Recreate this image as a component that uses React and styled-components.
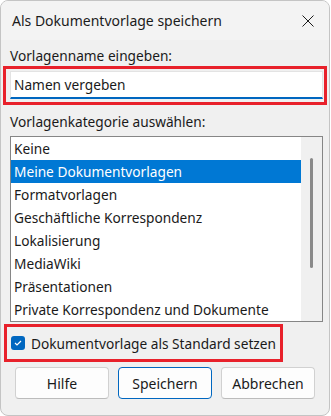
import React, { useState } from 'react';
import styled, { createGlobalStyle } from 'styled-components';

const GlobalStyle = createGlobalStyle`
  html, body {
    margin: 0;
    padding: 0;
    background: #ffffff;
  }
  body {
    font-family: "Noto Sans", "Open Sans", sans-serif;
    font-size: 13.7px;
    color: #1a1a1a;
  }
`;

const StyledWindow = styled.div`
  width: 328px;
  height: 414px;
  border: 1px solid #c4c4c4;
  border-radius: 8px;
  overflow: hidden;
  background: #f0f0f0;
  display: flex;
  flex-direction: column;
`;

const TitleBar = styled.div`
  height: 39px;
  flex: none;
  display: flex;
  align-items: center;
  justify-content: space-between;
  padding: 0 9px 0 11px;
  background: #f3f3f3;

  .title {
    font-size: 14px;
    line-height: 20px;
    color: #1b1b1b;
  }
`;

const CloseButton = styled.button`
  width: 24px;
  height: 24px;
  border: 0;
  padding: 0;
  background: transparent;
  display: flex;
  align-items: center;
  justify-content: center;
`;

const Body = styled.div`
  flex: 1;
  display: flex;
  flex-direction: column;
  padding: 6px 2px 0 2px;
`;

const Label = styled.div`
  line-height: 20px;
  padding-left: 7px;
  margin-top: ${({ $top }) => $top || 0}px;
`;

const Highlight = styled.div`
  border: 3px solid #e8212b;
  padding: ${({ $pad }) => $pad};
  margin: ${({ $margin }) => $margin || 0};
  align-self: ${({ $fit }) => ($fit ? 'flex-start' : 'stretch')};
`;

const NameInput = styled.input`
  display: block;
  box-sizing: border-box;
  width: 313px;
  height: 28px;
  margin: 0;
  padding: 0 3px;
  border: 1px solid #e3e3e3;
  border-bottom: 2px solid #0067c0;
  border-radius: 0;
  background: #ffffff;
  font: inherit;
  color: #1a1a1a;
  outline: none;
`;

const ListBox = styled.div`
  margin: 4px 0 0 7px;
  width: 311px;
  height: 184px;
  border: 1px solid #868686;
  background: #ffffff;
  display: flex;
`;

const Items = styled.ul`
  list-style: none;
  margin: 0;
  padding: 0;
  flex: 1;
`;

const Item = styled.li`
  height: 23px;
  line-height: 23px;
  padding-left: 3px;
  background: ${({ $selected }) => ($selected ? '#0078d4' : 'transparent')};
  color: ${({ $selected }) => ($selected ? '#ffffff' : '#1a1a1a')};
  white-space: nowrap;
`;

const ScrollTrack = styled.div`
  width: 21px;
  flex: none;
  background: #f0f0f0;
  display: flex;
  justify-content: center;
  padding-top: 21px;
  box-sizing: border-box;
`;

const ScrollThumb = styled.div`
  width: 3px;
  height: 110px;
  border-radius: 2px;
  background: #8a8a8a;
`;

const CheckRow = styled.label`
  display: flex;
  align-items: center;
  gap: 6px;
  height: 32px;
  padding-right: 4px;
`;

const CheckBox = styled.span`
  width: 14px;
  height: 14px;
  border-radius: 3px;
  background: #0067c0;
  display: flex;
  align-items: center;
  justify-content: center;
  flex: none;
`;

const ButtonRow = styled.div`
  display: flex;
  gap: 9px;
  padding: 5px 0 0 12px;
`;

const Button = styled.button`
  width: 94px;
  height: 32px;
  box-sizing: border-box;
  border-radius: 4px;
  border: 1px solid ${({ $primary }) => ($primary ? '#0067c0' : '#d1d1d1')};
  border-bottom-color: ${({ $primary }) => ($primary ? '#0067c0' : '#bcbcbc')};
  background: #fdfdfd;
  font: inherit;
  font-size: 14px;
  color: #1a1a1a;
  padding: 0;
`;

const categories = [
  'Keine',
  'Meine Dokumentvorlagen',
  'Formatvorlagen',
  'Geschäftliche Korrespondenz',
  'Lokalisierung',
  'MediaWiki',
  'Präsentationen',
  'Private Korrespondenz und Dokumente',
];

const App = () => {
  const [selected, setSelected] = useState(1);

  return (
    <>
      <GlobalStyle />
      <StyledWindow>
        <TitleBar>
          <span className="title">Als Dokumentvorlage speichern</span>
          <CloseButton aria-label="Schließen">
            <svg width="12" height="12" viewBox="0 0 12 12">
              <path d="M0.5 0.5 L11.5 11.5 M11.5 0.5 L0.5 11.5" stroke="#1b1b1b" strokeWidth="1" />
            </svg>
          </CloseButton>
        </TitleBar>

        <Body>
          <Label>Vorlagenname eingeben:</Label>
          <Highlight $pad="2px 3px 3px 4px">
            <NameInput defaultValue="Namen vergeben" />
          </Highlight>

          <Label $top={7}>Vorlagenkategorie auswählen:</Label>
          <ListBox>
            <Items>
              {categories.map((c, i) => (
                <Item key={c} $selected={i === selected} onClick={() => setSelected(i)}>
                  {c}
                </Item>
              ))}
            </Items>
            <ScrollTrack>
              <ScrollThumb />
            </ScrollTrack>
          </ListBox>

          <Highlight $pad="0 0 0 4px" $fit $margin="2px 0 0 1px">
            <CheckRow>
              <CheckBox>
                <svg width="8" height="6" viewBox="0 0 8 6">
                  <path d="M1 3 L3 5 L7 1" fill="none" stroke="#ffffff" strokeWidth="1.2" />
                </svg>
              </CheckBox>
              Dokumentvorlage als Standard setzen
            </CheckRow>
          </Highlight>

          <ButtonRow>
            <Button>Hilfe</Button>
            <Button $primary>Speichern</Button>
            <Button>Abbrechen</Button>
          </ButtonRow>
        </Body>
      </StyledWindow>
    </>
  );
};

export default App;
